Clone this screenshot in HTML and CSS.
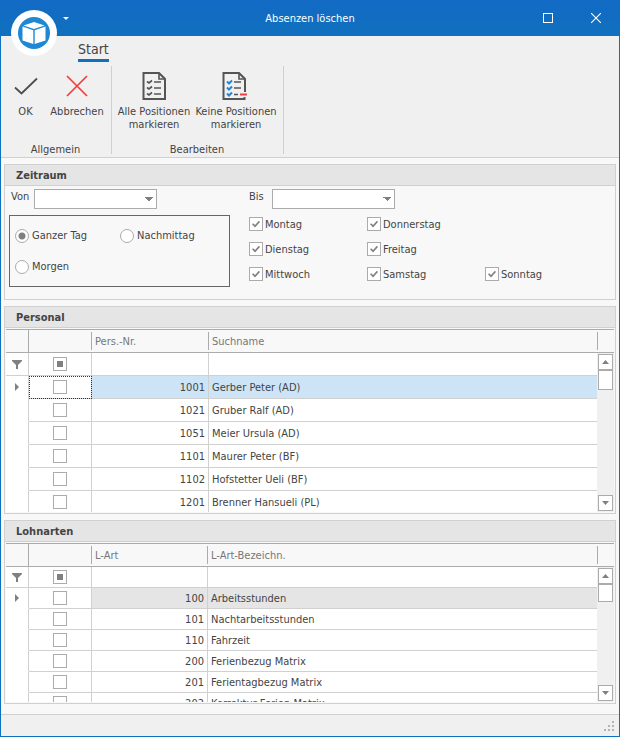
FILE: index.html
```html
<!DOCTYPE html>
<html lang="de">
<head>
    <meta charset="UTF-8">
    <meta name="viewport" content="width=device-width, initial-scale=1.0">
    <title>Absenzen löschen</title>
    <link rel="stylesheet" href="styles.css">
</head>
<body>
    <div class="window">
        <header class="titlebar">
            <div class="quick-access">
                <button class="app-button" type="button" aria-label="Menü">
                    <svg width="46" height="46" viewBox="0 0 46 46">
                        <circle cx="23" cy="23" r="23" fill="#fff"/>
                        <circle cx="23" cy="23" r="16" fill="#1e88d5"/>
                        <path d="M23 12 33.5 15.5 23 19 12.5 15.5Z" fill="#fff"/>
                        <path d="M11.5 16.5 22.3 20.3V34L11.5 30.5Z" fill="#fff"/>
                        <path d="M34.5 16.5 23.7 20.3V34L34.5 30.5Z" fill="#fff"/>
                    </svg>
                </button>
                <button class="caret-button" type="button" aria-label="Schnellzugriff">
                    <svg width="6" height="3" viewBox="0 0 6 3"><path d="M0 0H6L3 3Z" fill="#fff"/></svg>
                </button>
            </div>
            <div class="window-title">Absenzen löschen</div>
            <div class="window-buttons">
                <button type="button" aria-label="Maximieren">
                    <svg width="10" height="10" viewBox="0 0 10 10"><rect x=".5" y=".5" width="9" height="9" fill="none" stroke="#fff"/></svg>
                </button>
                <button type="button" aria-label="Schliessen">
                    <svg width="10" height="10" viewBox="0 0 10 10"><path d="M0 0 10 10M10 0 0 10" stroke="#fff" stroke-width="1.1"/></svg>
                </button>
            </div>
        </header>

        <nav class="ribbon">
            <div class="ribbon-tabs">
                <button class="ribbon-tab" type="button">Start</button>
            </div>
            <div class="ribbon-groups">
                <div class="ribbon-group">
                    <div class="ribbon-items">
                        <button class="ribbon-button narrow" type="button">
                            <svg width="32" height="32" viewBox="0 0 32 32"><path d="M5 17.5 11.5 23.5 27 8.5" fill="none" stroke="#4d4d4d" stroke-width="1.8"/></svg>
                            <span>OK</span>
                        </button>
                        <button class="ribbon-button medium" type="button">
                            <svg width="32" height="32" viewBox="0 0 32 32"><path d="M6 6 26 26M26 6 6 26" stroke="#f03e3e" stroke-width="1.7"/></svg>
                            <span>Abbrechen</span>
                        </button>
                    </div>
                    <div class="ribbon-caption">Allgemein</div>
                </div>
                <div class="ribbon-group">
                    <div class="ribbon-items">
                        <button class="ribbon-button wide" type="button">
                            <svg width="32" height="32" viewBox="0 0 32 32" fill="none" stroke="#555" stroke-width="2">
                                <path d="M5.5 3H21L27 9V29H5.5Z"/>
                                <path d="M21 3V9H27" stroke-width="1.6"/>
                                <path d="M9 11.5 11 13 14 10.5M9 17.5 11 19 14 16.5M9 23.5 11 25 14 22.5" stroke-width="1.7"/>
                                <path d="M16 12H23M16 18H23M16 24H23" stroke-width="1.6"/>
                            </svg>
                            <span>Alle Positionen<br>markieren</span>
                        </button>
                        <button class="ribbon-button wider" type="button">
                            <svg width="32" height="32" viewBox="0 0 32 32" fill="none" stroke="#555" stroke-width="2">
                                <path d="M25 22V9L19 3H3.5V29H24.500V27"/>
                                <path d="M19 3V9H25" stroke-width="1.6"/>
                                <path d="M7 11.5 9 13.500 12 10.5M7 17.5 9 19.500 12 16.5M7 23.5 9 25.500 12 22.5" stroke="#1e88d5"/>
                                <path d="M14 12H21M14 18H21M14 24.5H18" stroke-width="1.6"/>
                                <path d="M20 24.5H27" stroke="#f03e3e"/>
                            </svg>
                            <span>Keine Positionen<br>markieren</span>
                        </button>
                    </div>
                    <div class="ribbon-caption">Bearbeiten</div>
                </div>
            </div>
        </nav>

        <main class="content">
            <section class="panel">
                <h2 class="panel-title">Zeitraum</h2>
                <div class="period">
                    <div class="period-from">
                        <div class="field">
                            <label for="von">Von</label>
                            <select id="von"><option></option></select>
                        </div>
                        <fieldset class="day-part">
                            <label><input type="radio" name="part" checked>Ganzer Tag</label>
                            <label><input type="radio" name="part">Nachmittag</label>
                            <label><input type="radio" name="part">Morgen</label>
                        </fieldset>
                    </div>
                    <div class="period-to">
                        <div class="field">
                            <label for="bis">Bis</label>
                            <select id="bis"><option></option></select>
                        </div>
                        <div class="weekdays">
                            <label><input type="checkbox" checked>Montag</label>
                            <label><input type="checkbox" checked>Dienstag</label>
                            <label><input type="checkbox" checked>Mittwoch</label>
                            <label><input type="checkbox" checked>Donnerstag</label>
                            <label><input type="checkbox" checked>Freitag</label>
                            <label><input type="checkbox" checked>Samstag</label>
                            <label class="last-day"><input type="checkbox" checked>Sonntag</label>
                        </div>
                    </div>
                </div>
            </section>

            <section class="panel panel-personal">
                <h2 class="panel-title">Personal</h2>
                <div class="grid">
                    <div class="grid-view">
                        <table class="grid-table">
                            <colgroup><col class="col-marker"><col class="col-check"><col class="col-number"><col></colgroup>
                            <thead>
                                <tr><th></th><th></th><th>Pers.-Nr.</th><th>Suchname</th></tr>
                            </thead>
                            <tbody>
                                <tr class="filter">
                                    <td><svg width="10" height="9" viewBox="0 0 10 9"><path d="M0 0H10V1L6 5V9H4V5L0 1Z" fill="#808080"/></svg></td>
                                    <td><input type="checkbox" class="mixed" aria-label="Filter"></td><td></td><td></td>
                                </tr>
                                <tr class="selected">
                                    <td><svg width="4" height="8" viewBox="0 0 4 8"><path d="M0 0 4 4 0 8Z" fill="#808080"/></svg></td>
                                    <td class="focused"><input type="checkbox" aria-label="1001"></td><td>1001</td><td>Gerber Peter (AD)</td>
                                </tr>
                                <tr><td></td><td><input type="checkbox" aria-label="1021"></td><td>1021</td><td>Gruber Ralf (AD)</td></tr>
                                <tr><td></td><td><input type="checkbox" aria-label="1051"></td><td>1051</td><td>Meier Ursula (AD)</td></tr>
                                <tr><td></td><td><input type="checkbox" aria-label="1101"></td><td>1101</td><td>Maurer Peter (BF)</td></tr>
                                <tr><td></td><td><input type="checkbox" aria-label="1102"></td><td>1102</td><td>Hofstetter Ueli (BF)</td></tr>
                                <tr><td></td><td><input type="checkbox" aria-label="1201"></td><td>1201</td><td>Brenner Hansueli (PL)</td></tr>
                            </tbody>
                        </table>
                    </div>
                    <div class="grid-side">
                        <div class="side-head"></div>
                        <div class="scrollbar">
                            <button type="button" aria-label="Nach oben"><svg width="7" height="4" viewBox="0 0 7 4"><path d="M0 4 3.5 0 7 4Z" fill="#808080"/></svg></button>
                            <div class="thumb"></div>
                            <button type="button" aria-label="Nach unten"><svg width="7" height="4" viewBox="0 0 7 4"><path d="M0 0H7L3.5 4Z" fill="#808080"/></svg></button>
                        </div>
                    </div>
                </div>
            </section>

            <section class="panel panel-wages">
                <h2 class="panel-title">Lohnarten</h2>
                <div class="grid">
                    <div class="grid-view">
                        <table class="grid-table compact">
                            <colgroup><col class="col-marker"><col class="col-check"><col class="col-number"><col></colgroup>
                            <thead>
                                <tr><th></th><th></th><th>L-Art</th><th>L-Art-Bezeichn.</th></tr>
                            </thead>
                            <tbody>
                                <tr class="filter">
                                    <td><svg width="10" height="9" viewBox="0 0 10 9"><path d="M0 0H10V1L6 5V9H4V5L0 1Z" fill="#808080"/></svg></td>
                                    <td><input type="checkbox" class="mixed" aria-label="Filter"></td><td></td><td></td>
                                </tr>
                                <tr class="current">
                                    <td><svg width="4" height="8" viewBox="0 0 4 8"><path d="M0 0 4 4 0 8Z" fill="#808080"/></svg></td>
                                    <td><input type="checkbox" aria-label="100"></td><td>100</td><td>Arbeitsstunden</td>
                                </tr>
                                <tr><td></td><td><input type="checkbox" aria-label="101"></td><td>101</td><td>Nachtarbeitsstunden</td></tr>
                                <tr><td></td><td><input type="checkbox" aria-label="110"></td><td>110</td><td>Fahrzeit</td></tr>
                                <tr><td></td><td><input type="checkbox" aria-label="200"></td><td>200</td><td>Ferienbezug Matrix</td></tr>
                                <tr><td></td><td><input type="checkbox" aria-label="201"></td><td>201</td><td>Ferientagbezug Matrix</td></tr>
                                <tr><td></td><td><input type="checkbox" aria-label="202"></td><td>202</td><td>Korrektur Ferien Matrix</td></tr>
                            </tbody>
                        </table>
                    </div>
                    <div class="grid-side">
                        <div class="side-head"></div>
                        <div class="scrollbar">
                            <button type="button" aria-label="Nach oben"><svg width="7" height="4" viewBox="0 0 7 4"><path d="M0 4 3.5 0 7 4Z" fill="#808080"/></svg></button>
                            <div class="thumb small"></div>
                            <button type="button" aria-label="Nach unten"><svg width="7" height="4" viewBox="0 0 7 4"><path d="M0 0H7L3.5 4Z" fill="#808080"/></svg></button>
                        </div>
                    </div>
                </div>
            </section>
        </main>

        <footer class="statusbar">
            <svg width="10" height="10" viewBox="0 0 10 10" fill="#b4b4b4">
                <path d="M8 0h2v2h-2zM4 4h2v2h-2zM8 4h2v2h-2zM0 8h2v2h-2zM4 8h2v2h-2zM8 8h2v2h-2z"/>
            </svg>
        </footer>
    </div>
</body>
</html>
```
FILE: styles.css
```css
* {
    box-sizing: border-box;
}

body {
    margin: 0;
    font-family: Tahoma, "DejaVu Sans Condensed", "DejaVu Sans", sans-serif;
    font-size: 11px;
    line-height: 13px;
    color: #444;
}

button, select, input {
    font: inherit;
    color: inherit;
    margin: 0;
    padding: 0;
}

button {
    border: 0;
    background: none;
}

svg {
    display: block;
}

.window {
    display: flex;
    flex-direction: column;
    height: 100vh;
    border: 1px solid #1070c0;
    border-top: 0;
    background-color: #f8f8f8;
}

/* title bar */
.titlebar {
    display: grid;
    grid-template-columns: 1fr auto 1fr;
    align-items: center;
    height: 36px;
    margin: 0 -1px;
    background: linear-gradient(#126ac4, #1070be);
    color: #fff;
}

.quick-access {
    position: relative;
    display: flex;
    align-items: center;
    height: 36px;
    padding-left: 63px;
}

.app-button {
    position: absolute;
    left: 11px;
    top: 10px;
}

.window-buttons {
    display: flex;
    justify-content: flex-end;
}

.window-buttons button {
    display: flex;
    align-items: center;
    justify-content: center;
    width: 48px;
    height: 36px;
}

/* ribbon */
.ribbon {
    padding-bottom: 3px;
    border-bottom: 1px solid #d0d0d0;
    background-color: #f0f0f0;
}

.ribbon-tabs {
    height: 30px;
    padding: 4px 0 0 77px;
}

.ribbon-tab {
    height: 22px;
    border-bottom: 3px solid #1070c0;
    font-size: 14px;
    line-height: 19px;
}

.ribbon-groups {
    display: flex;
}

.ribbon-group {
    display: flex;
    flex-direction: column;
    height: 88px;
    padding: 4px 4px 0 3px;
    border-right: 1px solid #d0d0d0;
}

.ribbon-items {
    display: flex;
    flex: 1;
}

.ribbon-button {
    display: flex;
    flex-direction: column;
    align-items: center;
    gap: 3px;
    white-space: nowrap;
}

.narrow {
    width: 43px;
}

.medium {
    width: 60px;
}

.wide {
    width: 78px;
}

.wider {
    width: 86px;
}

.ribbon-caption {
    height: 12px;
    line-height: 15px;
    text-align: center;
}

/* panels */
.content {
    display: flex;
    flex-direction: column;
    flex: 1;
    gap: 6px;
    min-height: 0;
    padding: 6px 3px 10px;
}

.panel {
    border: 1px solid #d0d0d0;
}

.panel-title {
    height: 21px;
    margin: 0;
    padding-left: 11px;
    border-bottom: 1px solid #d0d0d0;
    background-color: #e5e5e5;
    font-size: 11px;
    line-height: 22px;
}

.period {
    display: flex;
    gap: 19px;
    padding: 3px 4px 12px;
}

.period-from {
    width: 221px;
}

.field {
    display: grid;
    grid-template-columns: 25px 123px;
}

.period-to .field {
    grid-template-columns: 23px 123px;
}

.period-from .field label {
    padding-left: 2px;
}

.field label {
    line-height: 16px;
}

select {
    appearance: none;
    height: 20px;
    border: 1px solid #ababab;
    border-radius: 0;
    background-color: #fff;
    background-image:
        linear-gradient(45deg, transparent 50%, #808080 50%),
        linear-gradient(-45deg, transparent 50%, #808080 50%);
    background-repeat: no-repeat;
    background-size: 4px 4px;
    background-position: right 7px center, right 3px center;
}

input {
    appearance: none;
    flex: none;
    width: 14px;
    height: 14px;
    border: 1px solid #ababab;
    background: #fff no-repeat center;
}

input[type="radio"] {
    border-radius: 50%;
}

input[type="radio"]:checked {
    background-image: radial-gradient(circle, #808080 3px, transparent 4px);
}

.weekdays input {
    display: grid;
    place-items: center;
}

/* tick mark */
.weekdays input::before {
    content: "";
    width: 8px;
    height: 7px;
    background-color: #808080;
    clip-path: polygon(0 55%, 14% 38%, 38% 66%, 86% 4%, 100% 20%, 38% 100%);
}

.mixed {
    background-image: linear-gradient(#808080, #808080);
    background-size: 6px 6px;
}

.day-part {
    display: grid;
    grid-template-columns: 105px 105px;
    grid-auto-rows: 31px;
    min-width: 0;
    margin: 6px 0 0;
    padding: 4px 5px;
    border: 1px solid #666;
}

.day-part label, .weekdays label {
    display: flex;
    align-items: center;
    gap: 3px;
}

.weekdays label {
    gap: 2px;
}

.weekdays {
    display: grid;
    grid-template-rows: repeat(3, 14px);
    grid-auto-flow: column;
    grid-auto-columns: 118px;
    row-gap: 11px;
    margin-top: 8px;
}

.last-day {
    grid-row: 3;
}

/* data grids */
.panel-personal, .panel-wages {
    display: flex;
    flex-direction: column;
}

.panel-personal {
    height: 208px;
    flex: none;
}

.panel-wages {
    flex: 1;
    min-height: 0;
}

.grid {
    display: flex;
    flex: 1;
    min-height: 0;
    margin: 1px;
}

.grid-view {
    flex: 1;
    overflow: hidden;
    background-color: #fff;
}

.grid-table {
    width: 100%;
    table-layout: fixed;
    border-collapse: separate;
    border-spacing: 0;
}

.col-marker {
    width: 23px;
}

.col-check {
    width: 63px;
}

.col-number {
    width: 117px;
}

.compact .col-number {
    width: 116px;
}

.grid-table th {
    height: 24px;
    padding: 0 3px;
    border: solid #ababab;
    border-width: 1px 0;
    background: #f8f8f8 linear-gradient(#ababab, #ababab) no-repeat right center / 1px 18px;
    color: #777;
    font-weight: normal;
    text-align: left;
}

.grid-table th:first-child {
    border-right-width: 1px;
    background-image: none;
}

.grid-table th:last-child {
    background-image: none;
}

.grid-table td {
    height: 23px;
    padding: 0 3px;
    border: solid #d0d0d0;
    border-width: 0 1px 1px 0;
    white-space: nowrap;
}

.compact td {
    height: 21px;
}

.grid-table td:first-child {
    border-bottom-color: #fff;
}

.grid-table .filter td:first-child {
    border-bottom-color: #d0d0d0;
}

.grid-table td:nth-child(3) {
    text-align: right;
}

.grid-table td:last-child {
    border-right: 0;
}

.grid-table td input, .grid-table td svg {
    display: block;
    margin: 0 auto;
}

.selected td:nth-child(n+3) {
    background-color: #cde4f7;
}

.current td:nth-child(n+3) {
    background-color: #e5e5e5;
}

.focused {
    outline: 1px dotted #333;
    outline-offset: -1px;
}

.grid-side {
    display: flex;
    flex-direction: column;
    width: 17px;
}

.side-head {
    height: 24px;
    border: solid #ababab;
    border-width: 1px 0;
    background: linear-gradient(#ababab, #ababab) no-repeat left center / 1px 18px;
}

.scrollbar {
    display: flex;
    flex-direction: column;
    flex: 1;
    padding: 1px;
    background-color: #f0f0f0;
}

.scrollbar button {
    display: flex;
    align-items: center;
    justify-content: center;
    height: 16px;
    border: 1px solid #ababab;
    background-color: #fff;
}

.thumb {
    height: 20px;
    margin-bottom: auto;
    border: 1px solid #ababab;
    background-color: #fff;
}

.thumb.small {
    height: 18px;
}

/* status bar */
.statusbar {
    display: flex;
    align-items: flex-end;
    justify-content: flex-end;
    height: 22px;
    padding: 5px;
    border-top: 1px solid #d0d0d0;
    background-color: #f0f0f0;
}
```
